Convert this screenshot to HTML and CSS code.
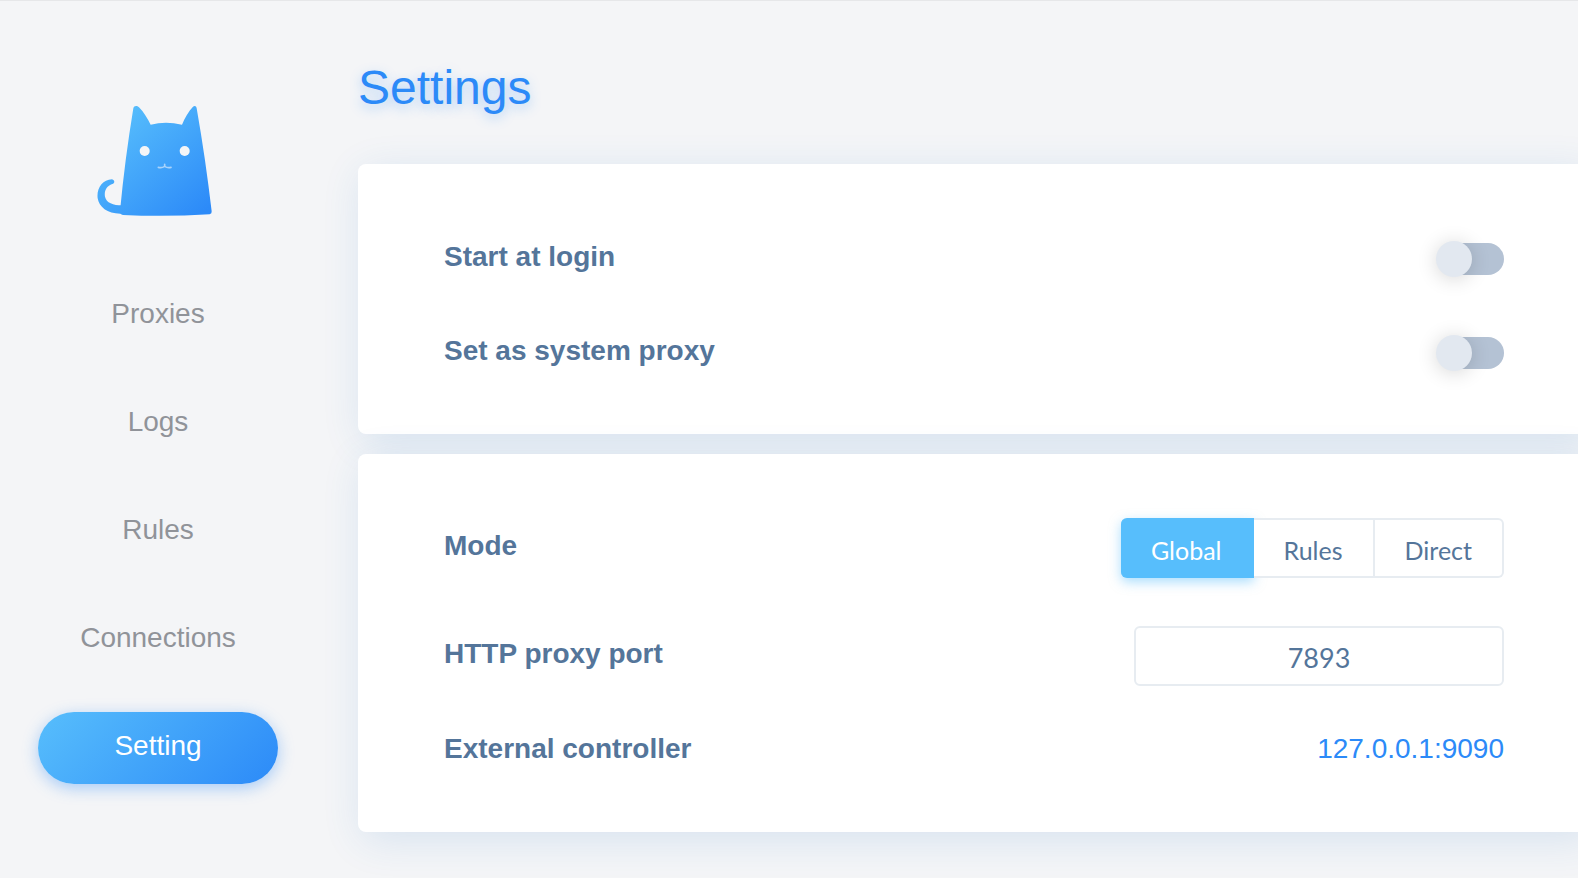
FILE: index.html
```html
<!DOCTYPE html>
<html lang="en">
<head>
<meta charset="utf-8">
<meta name="viewport" content="width=device-width, initial-scale=1">
<title>Settings</title>
<link rel="stylesheet" href="styles.css">
</head>
<body>
<div class="app">
  <aside class="sidebar">
    <svg class="logo" viewBox="52 45 366 336" role="img" aria-label="Cat logo">
      <defs>
        <linearGradient id="fur" gradientUnits="userSpaceOnUse" x1="110" y1="70" x2="370" y2="370">
          <stop offset="0" stop-color="#57befc"/>
          <stop offset="1" stop-color="#2c8af8"/>
        </linearGradient>
      </defs>
      <path fill="url(#fur)" d="M97 268C106 270 106 280 98 282C80 288 73 304 76 320C80 338 100 346 128 346L130 371C86 374 58 352 54 325C50 296 68 269 97 268Z"/>
      <path fill="url(#fur)" d="M161 55C163 46 172 46 178 52C192 66 204 86 213 104Q258 93 307 104C315 84 327 64 340 50C345 46 350 48 351 55C369 158 384 262 396 364Q397 371 390 373Q258 381 130 375Q120 373 121 364C131 260 144 158 161 55Z"/>
      <g fill="#f4f5f7">
        <circle cx="195" cy="183" r="15"/>
        <circle cx="315" cy="183" r="15"/>
      </g>
      <path fill="none" stroke="#a9d3fb" stroke-width="5" stroke-linecap="round" stroke-linejoin="round" d="M236 232Q246 235 255 229Q264 235 274 232M255 229V223"/>
    </svg>
    <nav class="menu">
      <a class="menu-item" href="#proxies">Proxies</a>
      <a class="menu-item" href="#logs">Logs</a>
      <a class="menu-item" href="#rules">Rules</a>
      <a class="menu-item" href="#connections">Connections</a>
      <a class="menu-item active" href="#settings" aria-current="page">Setting</a>
    </nav>
  </aside>
  <main class="content">
    <h1 class="title">Settings</h1>
    <section class="card card-toggles">
      <div class="row">
        <label class="label" for="start">Start at login</label>
        <input class="switch" type="checkbox" role="switch" id="start">
      </div>
      <div class="row">
        <label class="label" for="system">Set as system proxy</label>
        <input class="switch" type="checkbox" role="switch" id="system">
      </div>
    </section>
    <section class="card">
      <div class="row">
        <span class="label" id="mode">Mode</span>
        <div class="segments" role="group" aria-labelledby="mode">
          <button class="segment selected" type="button" aria-pressed="true">Global</button>
          <button class="segment" type="button" aria-pressed="false">Rules</button>
          <button class="segment" type="button" aria-pressed="false">Direct</button>
        </div>
      </div>
      <div class="row">
        <label class="label" for="port">HTTP proxy port</label>
        <input class="field" type="text" inputmode="numeric" id="port" value="7893">
      </div>
      <div class="row">
        <span class="label">External controller</span>
        <a class="address" href="#controller">127.0.0.1:9090</a>
      </div>
    </section>
  </main>
</div>
</body>
</html>
```
FILE: styles.css
```css
* {
  box-sizing: border-box;
}

body {
  margin: 0;
  background: #f4f5f7;
  font-family: "Liberation Sans", Arial, sans-serif;
  font-size: 28px;
  line-height: 28px;
}

.app {
  display: flex;
  min-height: 100vh;
  overflow: hidden;
  border-top: 1px solid #e6e7e9;
}

.sidebar {
  flex: none;
  display: flex;
  flex-direction: column;
  align-items: center;
  gap: 63px;
  width: 316px;
  padding: 104px 38px 40px;
}

.logo {
  display: block;
  width: 122px;
  height: 112px;
}

.menu {
  display: flex;
  flex-direction: column;
  gap: 36px;
  width: 100%;
}

.menu-item {
  display: flex;
  align-items: center;
  justify-content: center;
  height: 72px;
  padding-bottom: 4px;
  border-radius: 36px;
  color: #909399;
  text-decoration: none;
}

.menu-item.active {
  background: linear-gradient(135deg, #57befc, #2c8af8);
  box-shadow: 0 4px 16px rgba(44, 138, 248, 0.4);
  color: #fff;
}

.content {
  flex: 1;
  padding: 59px 0 40px 42px;
}

.title {
  margin: 0 0 48px;
  color: #2c8af8;
  font-size: 48px;
  font-weight: 400;
  line-height: 56px;
  text-shadow: 0 4px 12px rgba(44, 138, 248, 0.35);
}

.card {
  display: flex;
  flex-direction: column;
  gap: 48px;
  margin-right: -12px;
  padding: 64px 86px;
  border-radius: 8px;
  background: #fff;
  box-shadow: 4px 8px 40px rgba(44, 120, 200, 0.14);
}

.card-toggles {
  gap: 60px;
  margin-bottom: 20px;
  padding-top: 78px;
}

.row {
  display: flex;
  align-items: center;
  justify-content: space-between;
}

.label {
  padding: 1px 0 5px;
  color: #54759a;
  font-weight: 700;
}

.switch {
  appearance: none;
  position: relative;
  width: 64px;
  height: 32px;
  margin: 0;
  border-radius: 16px;
  background: #b4c2d4;
}

.switch::before {
  content: "";
  position: absolute;
  top: -2px;
  left: -4px;
  width: 36px;
  height: 36px;
  border-radius: 50%;
  background: #e2e8f0;
  box-shadow: 0 2px 20px rgba(0, 0, 0, 0.16);
}

.segments {
  display: flex;
  height: 60px;
}

.segment {
  padding: 4px 30px 0;
  border: 2px solid #e7ecf1;
  border-left-width: 0;
  background: #fff;
  color: #54759a;
  font-family: Lato, sans-serif;
  font-size: 25px;
}

.segment:last-child {
  border-radius: 0 6px 6px 0;
}

.segment.selected {
  border-color: #57befc;
  border-radius: 6px 0 0 6px;
  background: #57befc;
  box-shadow: 0 4px 12px rgba(87, 190, 252, 0.5);
  color: #fff;
}

.field {
  width: 370px;
  height: 60px;
  padding: 2px 16px 0;
  border: 2px solid #e7ecf1;
  border-radius: 6px;
  background: #fff;
  color: #54759a;
  font-family: Lato, sans-serif;
  font-size: 27px;
  text-align: center;
}

.address {
  padding: 1px 0 5px;
  color: #2c8af8;
  text-decoration: none;
}
```
